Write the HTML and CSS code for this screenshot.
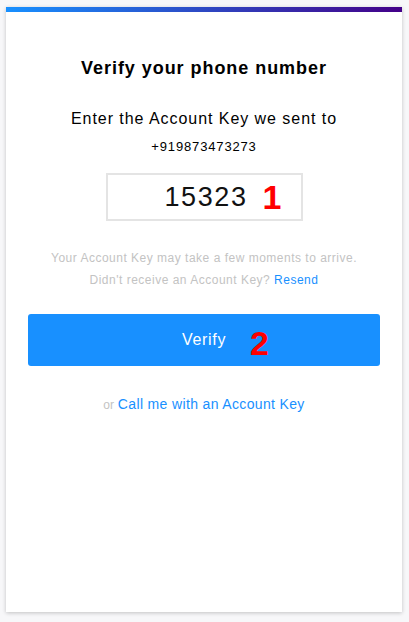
FILE: index.html
```html
<!DOCTYPE html>
<html>
<head>
<meta charset="utf-8">
<link rel="stylesheet" href="styles.css">
</head>
<body>
<div class="card">
  <div class="bar"></div>
  <div class="content">
    <h1 class="title">Verify your phone number</h1>
    <p class="subtitle">Enter the Account Key we sent to</p>
    <p class="phone">+919873473273</p>
    <div class="input-wrap">
      <div class="input">15323</div>
      <span class="marker marker-1">1</span>
    </div>
    <p class="hint">Your Account Key may take a few moments to arrive.</p>
    <p class="hint hint-2">Didn't receive an Account Key? <a class="link">Resend</a></p>
    <div class="btn-wrap">
      <button class="btn">Verify</button>
      <span class="marker marker-2">2</span>
    </div>
    <p class="alt"><span class="or">or</span> <a class="link link-lg">Call me with an Account Key</a></p>
  </div>
</div>
</body>
</html>
```
FILE: styles.css
```css
html, body {
  margin: 0;
  padding: 0;
  background: #f7f7f9;
  font-family: "Liberation Sans", Arial, sans-serif;
}
body {
  padding: 7px 7px 10px 6px;
  height: 622px;
  box-sizing: border-box;
}
.card {
  background: #fff;
  height: 605px;
  box-shadow: 0 1px 4px rgba(0,0,0,0.22);
  display: flex;
  flex-direction: column;
}
.bar {
  height: 5px;
  background: linear-gradient(to right, #1890ff, #430088);
}
.content {
  display: flex;
  flex-direction: column;
  align-items: center;
  padding: 0 22px;
}
.title {
  margin: 45px 0 0;
  font-size: 18px;
  letter-spacing: 0.95px;
  font-weight: bold;
  line-height: 22px;
  color: #000;
}
.subtitle {
  margin: 30px 0 0;
  font-size: 16px;
  letter-spacing: 0.95px;
  line-height: 20px;
  color: #000;
}
.phone {
  margin: 10px 0 0;
  font-size: 13px;
  letter-spacing: 0.85px;
  line-height: 16px;
  color: #000;
}
.input-wrap {
  position: relative;
  margin-top: 18px;
}
.input {
  width: 189px;
  height: 44px;
  border: 2px solid #e4e4e4;
  font-size: 27px;
  letter-spacing: 1.6px;
  line-height: 44px;
  text-align: center;
  color: #111;
  padding-left: 4px;
  box-sizing: content-box;
}
.marker {
  position: absolute;
  color: #ff0000;
  font-weight: bold;
  font-size: 34px;
  line-height: 34px;
}
.marker-1 {
  left: 157px;
  top: 7px;
}
.hint {
  margin: 29px 0 0;
  font-size: 12px;
  letter-spacing: 0.5px;
  line-height: 16px;
  color: #c3c3c3;
}
.hint-2 {
  margin-top: 6px;
}
.link {
  color: #1890ff;
  text-decoration: none;
}
.btn-wrap {
  position: relative;
  align-self: stretch;
  margin-top: 26px;
}
.btn {
  display: block;
  width: 100%;
  height: 52px;
  border: none;
  border-radius: 3px;
  background: #1890ff;
  color: #fff;
  font-family: "Liberation Sans", Arial, sans-serif;
  font-size: 16px;
  letter-spacing: 0.7px;
}
.marker-2 {
  left: 222px;
  top: 12px;
}
.alt {
  margin: 29px 0 0;
  font-size: 14px;
  line-height: 18px;
}
.or {
  color: #c3c3c3;
  font-size: 12px;
}
.link-lg {
  font-size: 14px;
  letter-spacing: 0.35px;
}
```
